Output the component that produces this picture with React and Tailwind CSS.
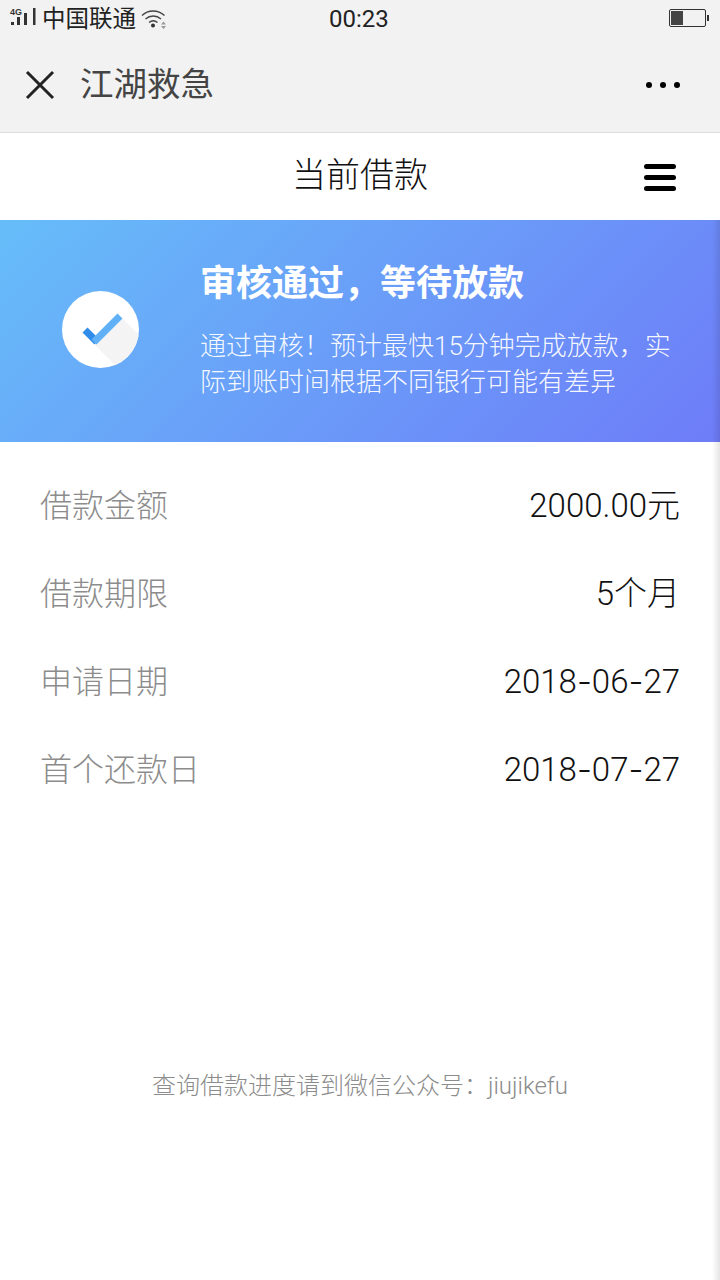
const rows = [
  { label: '借款金额', value: '2000.00元' },
  { label: '借款期限', value: '5个月' },
  { label: '申请日期', value: '2018-06-27' },
  { label: '首个还款日', value: '2018-07-27' },
];

// hyphens in the dates are much longer than Roboto's, so they take Inter's glyph
function DateValue({ text }) {
  const parts = text.split('-');
  return (
    <span className="text-[33px] font-light text-[#111]">
      {parts.map((part, i) => (
        <span key={i}>
          {i > 0 && <span className="font-['Inter']">-</span>}
          {part}
        </span>
      ))}
    </span>
  );
}

function Signal() {
  return (
    <div className="relative h-[26px] w-[28px]">
      <span className="absolute left-[1px] top-[2px] text-[9px] font-bold leading-[8px] font-['Liberation_Sans'] text-[#333]">4G</span>
      <svg width="28" height="26" viewBox="0 0 28 26" className="absolute left-0 top-0">
        <rect x="2" y="16" width="3" height="3" fill="#333" />
        <rect x="8" y="11" width="3" height="8" fill="#333" />
        <rect x="15" y="7" width="3" height="12" fill="#333" />
        <rect x="24" y="2" width="2.500" height="17" fill="#333" />
      </svg>
    </div>
  );
}

function Wifi() {
  return (
    <svg width="25" height="20" viewBox="0 0 25 20" fill="none" stroke="#444" strokeWidth="1.4">
      <path d="M1 6.500C7 0.500 17 0.500 23.500 6.500" />
      <path d="M4.500 10C9 6 15.500 6 20 10" />
      <path d="M8 13.500C10.500 11.500 14 11.500 16.500 13.500" />
      <circle cx="12" cy="16.500" r="2" fill="#333" stroke="none" />
      <path d="M20 15.500l2.500-3 2.500 3zM20 17l2.500 3 2.500-3z" fill="#999" stroke="none" />
    </svg>
  );
}

function Battery() {
  return (
    <div className="mb-[2px] flex items-center">
      <div className="h-[18px] w-[37px] rounded-[2px] border border-[#333] p-[1px]">
        <div className="h-full w-[12px] bg-[#444]" />
      </div>
      <div className="ml-[1px] h-[6px] w-[2px] bg-[#333]" />
    </div>
  );
}

function CloseIcon() {
  return (
    <svg width="30" height="30" viewBox="0 0 30 30" fill="none" stroke="#222" strokeWidth="3">
      <path d="M2 2L28 28M28 2L2 28" />
    </svg>
  );
}

function CheckBadge() {
  return (
    <svg width="77" height="77" viewBox="0 0 77 77">
      <defs>
        <clipPath id="badge">
          <circle cx="38.500" cy="38.500" r="38.500" />
        </clipPath>
      </defs>
      <circle cx="38.500" cy="38.500" r="38.500" fill="#fff" />
      <path d="M33 54L60 27L94 61L67 88Z" fill="#f4f4f4" clipPath="url(#badge)" />
      <path d="M23 39L35 51" stroke="#2f8ce8" strokeWidth="7" fill="none" />
      <path d="M32 51L58 25" stroke="#5fb0f6" strokeWidth="7" fill="none" />
    </svg>
  );
}

export default function App() {
  return (
    <div className="relative flex h-[1280px] w-[720px] flex-col overflow-hidden bg-white font-['Roboto','Noto_Sans_CJK_SC',sans-serif]">
      <div className="h-[133px] border-b border-[#dedede] bg-[#f2f2f2]">
        <div className="relative flex h-[40px] items-center justify-between pb-[2px] pl-[9px] pr-[11px]">
          <div className="flex items-center">
            <Signal />
            <span className="ml-[5px] text-[23.500px] leading-[38px] text-[#222]">中国联通</span>
            <div className="ml-[5px]">
              <Wifi />
            </div>
          </div>
          <span className="absolute left-[329px] top-0 text-[24px] leading-[38px] text-[#222]">00:23</span>
          <Battery />
        </div>
        <div className="flex h-[92px] items-center pb-[2px] pl-[25px] pr-[40px]">
          <CloseIcon />
          <span className="ml-[25px] text-[33.500px] text-[#444]">江湖救急</span>
          <div className="ml-auto flex gap-[8px]">
            <span className="h-[6px] w-[6px] rounded-full bg-black" />
            <span className="h-[6px] w-[6px] rounded-full bg-black" />
            <span className="h-[6px] w-[6px] rounded-full bg-black" />
          </div>
        </div>
      </div>

      <div className="relative flex h-[87px] items-center justify-center pb-[3px]">
        <span className="text-[34px] font-light text-[#111]">当前借款</span>
        <div className="absolute right-[44px] top-[31px] flex w-[32px] flex-col gap-[6px]">
          <span className="h-[5px] rounded-full bg-black" />
          <span className="h-[5px] rounded-full bg-black" />
          <span className="h-[5px] rounded-full bg-black" />
        </div>
      </div>

      <div className="flex h-[222px] items-center bg-[linear-gradient(135deg,#66bdf9,#6e7cf8)] pb-[1px] pl-[62px] pr-[40px]">
        <div className="mb-[2px] shrink-0">
          <CheckBadge />
        </div>
        <div className="ml-[61px]">
          <h1 className="text-[36px] leading-[44px] font-bold text-white">审核通过，等待放款</h1>
          <p className="mt-[22px] text-[26px] leading-[36px] font-light text-white/95">
            通过审核！预计最快15分钟完成放款，实际到账时间根据不同银行可能有差异
          </p>
        </div>
      </div>

      <div className="flex flex-col px-[40px] pt-[20px]">
        {rows.map((row) => (
          <div key={row.label} className="flex h-[88px] items-center justify-between">
            <span className="text-[32px] font-light text-[#8c8c8c]">{row.label}</span>
            <DateValue text={row.value} />
          </div>
        ))}
      </div>

      <p className="mt-[256px] text-center text-[24px] font-light leading-[32px] text-[#8c8c8c]">
        查询借款进度请到微信公众号：jiujikefu
      </p>

      <div className="absolute bottom-0 right-0 top-[220px] w-[8px] bg-gradient-to-r from-black/0 to-black/10" />
    </div>
  );
}
